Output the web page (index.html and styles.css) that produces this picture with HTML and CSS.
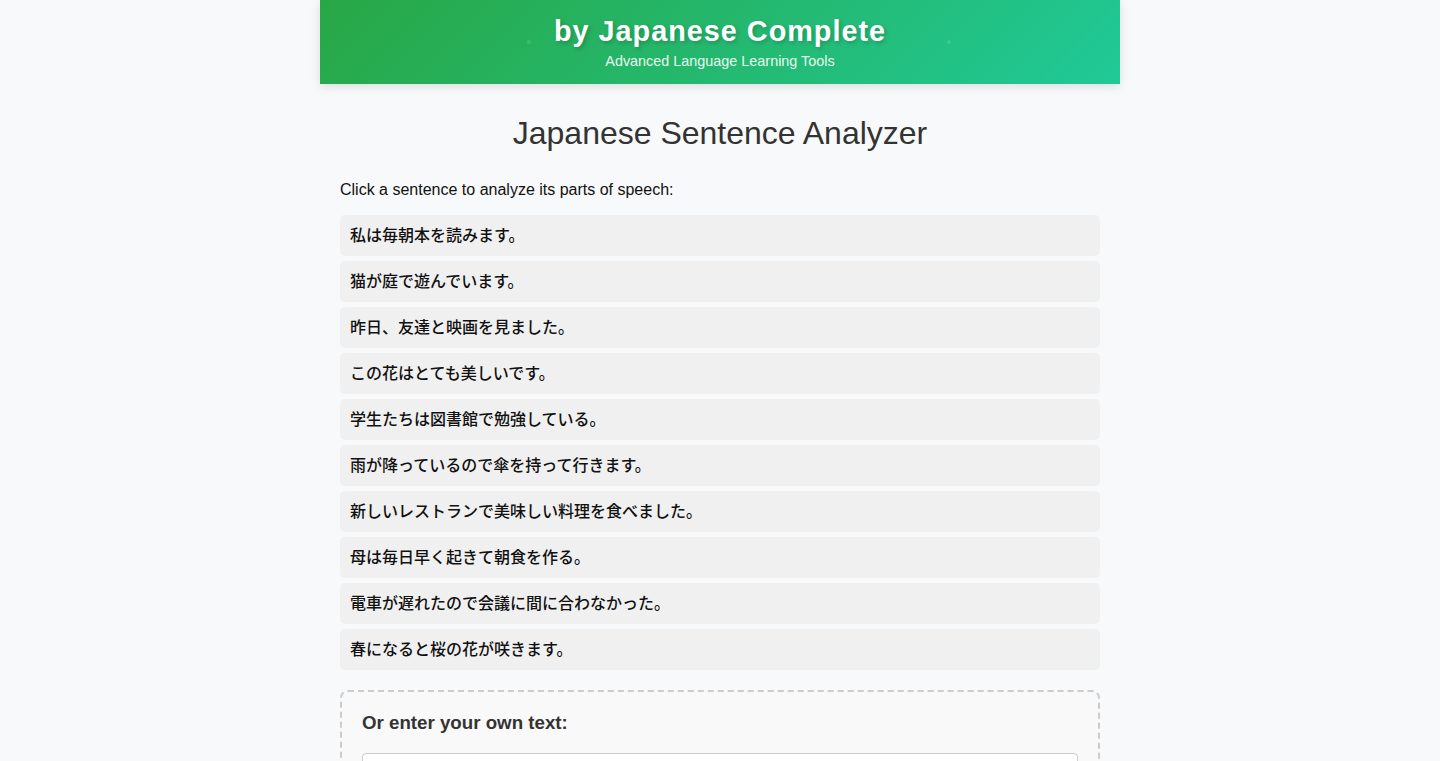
FILE: index.html
```html
<!DOCTYPE html>
<html lang="ja">
<head>
<meta charset="utf-8">
<title>Japanese Sentence Analyzer</title>
<link rel="stylesheet" href="styles.css">
</head>
<body>
<div class="page">
  <header class="site-header">
    <span class="dot dot-left"></span>
    <span class="dot dot-right"></span>
    <h1 class="brand">by Japanese Complete</h1>
    <p class="tagline">Advanced Language Learning Tools</p>
  </header>
  <main class="content">
    <h2 class="title">Japanese Sentence Analyzer</h2>
    <p class="intro">Click a sentence to analyze its parts of speech:</p>
    <ul class="sentences">
      <li class="sentence">私は毎朝本を読みます。</li>
      <li class="sentence">猫が庭で遊んでいます。</li>
      <li class="sentence">昨日、友達と映画を見ました。</li>
      <li class="sentence">この花はとても美しいです。</li>
      <li class="sentence">学生たちは図書館で勉強している。</li>
      <li class="sentence">雨が降っているので傘を持って行きます。</li>
      <li class="sentence">新しいレストランで美味しい料理を食べました。</li>
      <li class="sentence">母は毎日早く起きて朝食を作る。</li>
      <li class="sentence">電車が遅れたので会議に間に合わなかった。</li>
      <li class="sentence">春になると桜の花が咲きます。</li>
    </ul>
    <section class="custom">
      <h3 class="custom-title">Or enter your own text:</h3>
      <textarea class="custom-input"></textarea>
    </section>
  </main>
</div>
</body>
</html>
```

FILE: styles.css
```css
html, body {
  margin: 0;
  padding: 0;
}
body {
  background: #f8f9fa;
  font-family: "Liberation Sans", Arial, "Noto Sans CJK JP", sans-serif;
  color: #222;
}
.page {
  width: 800px;
  margin: 0 auto;
}
.site-header {
  position: relative;
  height: 84px;
  box-sizing: border-box;
  padding-top: 14px;
  text-align: center;
  background: linear-gradient(135deg, #28a745 0%, #20c997 100%);
  box-shadow: 0 2px 10px rgba(0, 0, 0, 0.12);
  color: #fff;
}
.dot {
  position: absolute;
  top: 40px;
  width: 4px;
  height: 4px;
  border-radius: 50%;
  background: rgba(255, 255, 255, 0.12);
}
.dot-left { left: 207px; }
.dot-right { left: 627px; }
.brand {
  margin: 0;
  font-size: 28.8px;
  line-height: 35px;
  font-weight: bold;
  letter-spacing: 1px;
  text-shadow: 2px 2px 4px rgba(0, 0, 0, 0.2);
}
.tagline {
  margin: 2px 0 0;
  font-size: 14.4px;
  line-height: 20px;
  opacity: 0.9;
}
.content {
  padding: 20px;
}
.title {
  margin: 10px 0 0;
  font-size: 32px;
  line-height: 38px;
  font-weight: normal;
  text-align: center;
  color: #333;
}
.intro {
  margin: 29px 0 0;
  font-size: 16px;
  line-height: 18px;
  color: #111;
}
.sentences {
  list-style: none;
  margin: 16px 0 0;
  padding: 0;
  display: flex;
  flex-direction: column;
  gap: 5px;
}
.sentence {
  background: #f0f0f0;
  border-radius: 5px;
  padding: 10px;
  font-size: 16px;
  line-height: 21px;
  font-weight: 500;
  color: #111;
  cursor: pointer;
}
.custom {
  margin-top: 20px;
  border: 2px dashed #ccc;
  border-radius: 8px;
  background: #f9f9f9;
  padding: 20px;
}
.custom-title {
  margin: 0 0 20px;
  font-size: 18.72px;
  line-height: 21px;
  font-weight: bold;
  color: #333;
}
.custom-input {
  display: block;
  width: 100%;
  box-sizing: border-box;
  height: 100px;
  border: 1px solid #ccc;
  border-radius: 4px;
  background: #fff;
  padding: 10px;
  font-family: inherit;
  font-size: 16px;
  resize: vertical;
}
```
